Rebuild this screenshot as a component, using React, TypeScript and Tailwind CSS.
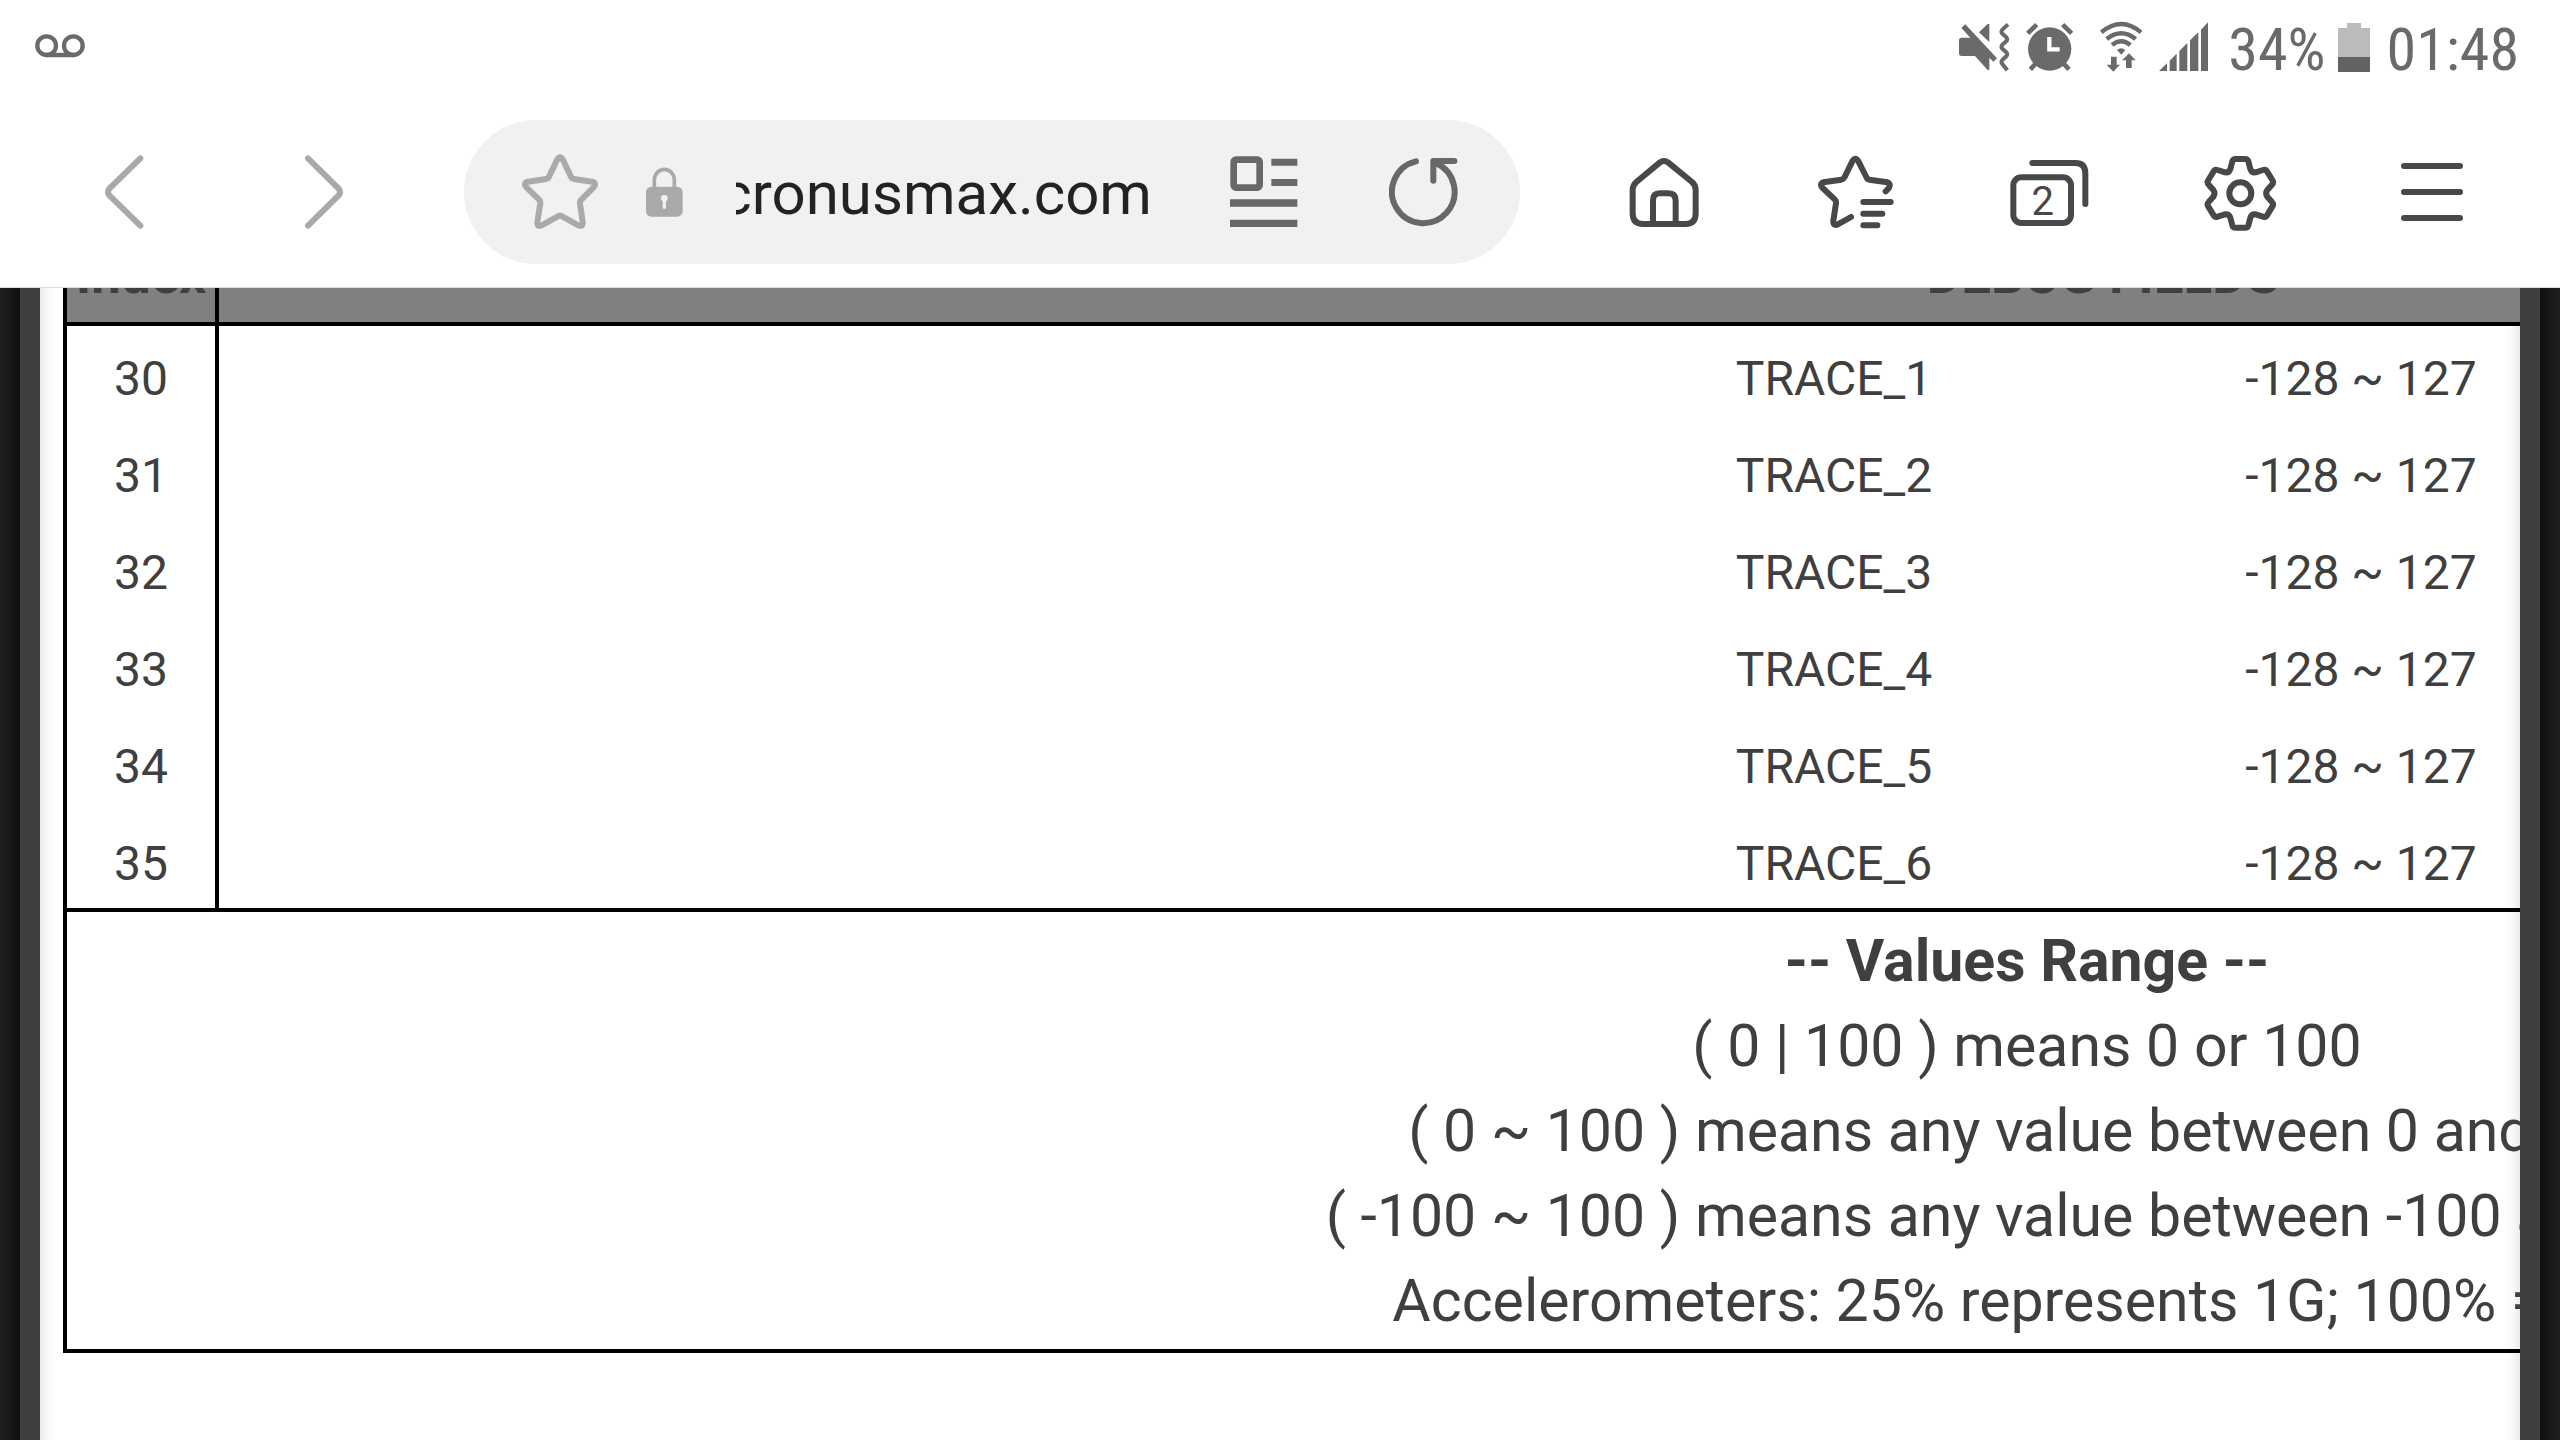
import React from "react";

type IconProps = { box: string; className: string; children: React.ReactNode };

function Icon({ box, className, children }: IconProps) {
  return (
    <svg viewBox={box} className={`shrink-0 ${className}`} fill="none" strokeLinecap="round" strokeLinejoin="round" aria-hidden="true">
      {children}
    </svg>
  );
}

function StatusBar() {
  return (
    <div className="flex h-24 items-center pr-[41px] pl-[35px] text-[#6a6a6a]">
      <Icon box="105 60 150 168" className="h-14 w-[50px]">
        <g stroke="currentColor" strokeWidth="13">
          <circle cx="140" cy="137" r="28" />
          <circle cx="220" cy="137" r="28" />
          <path d="M140 165H220" />
        </g>
      </Icon>
      <Icon box="42 30 153 168" className="ml-auto h-14 w-[51px]">
        <path fill="currentColor" d="M50 83H76L49 54L61 43L156 145L145 155L133 143V180H128L90 138H50Q42 138 42 130V91Q42 83 50 83ZM102 67L128 42H133V96Z" />
        <path stroke="currentColor" strokeWidth="12" strokeLinecap="butt" d="M189 43L172 59Q167 65 172 71L184 82Q189 88 184 94L172 104Q167 110 172 116L184 127Q189 133 184 139L172 150Q167 156 172 162L187 181" />
      </Icon>
      <Icon box="243 30 141 168" className="ml-4 h-14 w-[47px]">
        <circle cx="314" cy="117" r="65" fill="currentColor" />
        <path stroke="currentColor" strokeWidth="14" strokeLinecap="butt" d="M248 70L275 44M353 44L380 70M272 161L256 178M356 161L372 178" />
        <path stroke="white" strokeWidth="13" strokeLinecap="butt" strokeLinejoin="miter" d="M313 81V118H344" />
      </Icon>
      <Icon box="466 30 129 168" className="ml-[27px] h-14 w-[43px]">
        <path stroke="currentColor" strokeWidth="13" strokeLinecap="butt" d="M470 67Q530 17 589 67M486 87Q530 52 573 87M502 105Q530 82 557 105" />
        <path fill="currentColor" d="M517 120Q530 109 542 120L530 134ZM499 140H516V164H526L506 185L486 164H499ZM553 130L573 151H561V174H544V151H532Z" />
      </Icon>
      <Icon box="642 30 147 168" className="ml-4 h-14 w-[49px]">
        <path fill="currentColor" d="M642 183L666 160V183ZM674 152L695 131V183H674ZM703 123L727 99V183H703ZM735 91L760 67V183H735ZM768 59L789 37V183H768Z" />
      </Icon>
      <span className="ml-5 pt-1 font-['Roboto_Condensed',Roboto,sans-serif] text-[60px] leading-none">34%</span>
      <Icon box="2338 20 32 56" className="ml-3 h-14 w-8">
        <path fill="#bbbbbb" d="M2338 28H2347V23H2361V28H2370V57H2338Z" />
        <path fill="#636363" d="M2338 57H2370V72H2338Z" />
      </Icon>
      <span className="ml-[17px] pt-1 font-['Roboto_Condensed',Roboto,sans-serif] text-[60px] leading-none">01:48</span>
    </div>
  );
}

function Toolbar() {
  return (
    <nav className="flex h-48 items-center border-b border-[#dedede] pr-24 pl-[104px] text-[#484848]">
      <button type="button" aria-label="Back" className="text-[#a9a9a9]">
        <Icon box="312 456 120 240" className="h-20 w-10">
          <path stroke="currentColor" strokeWidth="18" d="M421 475L328 566Q320 576 328 586L421 677" />
        </Icon>
      </button>
      <button type="button" aria-label="Forward" className="ml-40 text-[#a9a9a9]">
        <Icon box="912 456 120 240" className="h-20 w-10">
          <path stroke="currentColor" strokeWidth="18" d="M924 475L1016 566Q1024 576 1016 586L924 677" />
        </Icon>
      </button>

      <div className="ml-[120px] flex h-36 min-w-0 flex-1 items-center rounded-full bg-[#f1f1f1] pr-[61px] pl-[58px] text-[#686868]">
        <button type="button" aria-label="Bookmark this page" className="text-[#a9abaa]">
          <Icon box="66 66 228 240" className="h-20 w-[76px]">
            <path
              stroke="currentColor"
              strokeWidth="18"
              d="M172 88Q180 76 188 88L213 140Q215 146 222 147L276 155Q292 160 280 173L244 209Q239 214 240 220L248 276Q249 292 235 286L188 260Q180 254 172 260L125 286Q111 292 112 276L121 220Q122 214 117 209L80 173Q68 160 84 155L138 147Q145 146 147 140Z"
            />
          </Icon>
        </button>
        <Icon box="437 66 111 240" className="ml-12 h-20 w-[37px]">
          <rect x="437" y="170" width="110" height="90" rx="16" fill="#a9a9a9" />
          <path stroke="#a9a9a9" strokeWidth="11" d="M462 174V150A30 32 0 0 1 522 150V174" />
          <circle cx="492" cy="205" r="10" fill="#f1f1f1" />
          <path stroke="#f1f1f1" strokeWidth="10" d="M492 206V232" />
        </Icon>
        <input
          type="text"
          aria-label="Address"
          dir="rtl"
          readOnly
          value="cronusmax.com"
          className="ml-[53px] h-20 w-0 min-w-0 flex-1 bg-transparent pt-1 text-[60px] leading-none text-[#222222] outline-none"
        />
        <button type="button" aria-label="Reader mode" className="ml-[78px]">
          <Icon box="30 66 204 240" className="h-20 w-[68px]">
            <rect x="41" y="89" width="78" height="84" rx="7" stroke="currentColor" strokeWidth="20" />
            <path fill="currentColor" d="M154 86H232V107H154ZM154 147H232V168H154ZM30 208H232V230H30ZM30 269H232V291H30Z" />
          </Icon>
        </button>
        <button type="button" aria-label="Reload" className="ml-[91px]">
          <Icon box="508 66 210 240" className="h-20 w-[70px]">
            <path stroke="currentColor" strokeWidth="18" d="M589 94A94 94 0 1 0 650 100M704 93H641V152" />
          </Icon>
        </button>
      </div>

      <button type="button" aria-label="Home" className="ml-[109px]">
        <Icon box="1228 66 213 240" className="h-20 w-[71px]">
          <path
            stroke="currentColor"
            strokeWidth="18"
            d="M1239 180Q1239 166 1250 156L1320 98Q1333 88 1346 98L1417 156Q1428 166 1428 180V250Q1428 282 1398 282H1270Q1239 282 1239 250ZM1300 282V212Q1300 190 1320 190H1346Q1368 190 1368 212V282"
          />
        </Icon>
      </button>
      <button type="button" aria-label="Bookmarks" className="ml-[118px]">
        <Icon box="54 66 228 240" className="h-20 w-[76px]">
          <path
            stroke="currentColor"
            strokeWidth="18"
            d="M257 184L265 176Q275 162 262 157L208 149Q201 147 199 141L174 92Q166 80 158 92L134 141Q131 147 124 149L70 157Q57 162 68 174L104 208Q109 213 108 220L100 272Q98 288 112 284L153 261M190 216H272M190 251H247M190 286H232"
          />
        </Icon>
      </button>
      <button type="button" aria-label="Tabs" className="ml-[116px]">
        <Icon box="629 66 237 240" className="h-20 w-[79px]">
          <rect x="639" y="142" width="173" height="137" rx="24" stroke="currentColor" strokeWidth="18" />
          <path stroke="currentColor" strokeWidth="18" d="M696 99H825Q855 99 855 130V222" />
          <text x="727" y="255" textAnchor="middle" fontSize="120" fill="currentColor">2</text>
        </Icon>
      </button>
      <button type="button" aria-label="Settings" className="ml-[115px]">
        <Icon box="1211 66 219 240" className="h-20 w-[73px]">
          <circle cx="1320" cy="190" r="33" stroke="currentColor" strokeWidth="18" />
          <path
            stroke="currentColor"
            strokeWidth="18"
            d="M1306 87H1334Q1342 87 1344 94L1350 117Q1354 129 1366 127L1388 120Q1396 117 1400 124L1416 150Q1421 158 1415 164L1401 180Q1394 190 1401 200L1415 216Q1421 222 1416 230L1400 256Q1396 263 1388 260L1366 253Q1354 251 1350 263L1344 286Q1342 293 1334 293H1306Q1298 293 1296 286L1290 263Q1286 251 1274 253L1252 260Q1244 263 1240 256L1224 230Q1219 222 1225 216L1239 200Q1246 190 1239 180L1225 164Q1219 158 1224 150L1240 124Q1244 117 1252 120L1274 127Q1286 129 1290 117L1296 94Q1298 87 1306 87Z"
          />
        </Icon>
      </button>
      <button type="button" aria-label="Menu" className="ml-[123px]">
        <Icon box="2400 152 64 80" className="h-20 w-16">
          <path stroke="currentColor" strokeWidth="6" d="M2404 166H2460M2404 192H2460M2404 218H2460" />
        </Icon>
      </button>
    </nav>
  );
}

const traces = [
  { index: 30, name: "TRACE_1" },
  { index: 31, name: "TRACE_2" },
  { index: 32, name: "TRACE_3" },
  { index: 33, name: "TRACE_4" },
  { index: 34, name: "TRACE_5" },
  { index: 35, name: "TRACE_6" },
];

function FieldsTable() {
  return (
    <table className="w-[3928px] table-fixed border-collapse border-4 border-black text-center text-[48px] leading-[89px]">
      <colgroup>
        <col className="w-[152px]" />
        <col className="w-[1433px]" />
        <col className="w-[368px]" />
        <col className="w-[686px]" />
        <col />
      </colgroup>
      <thead>
        <tr className="bg-[#808080] text-[53px] leading-[93px]">
          <th scope="col" className="border-4 border-black p-0 font-bold">Index</th>
          <th scope="col" colSpan={4} className="border-4 border-black p-0 font-bold">DEBUG FIELDS</th>
        </tr>
      </thead>
      <tbody>
        {traces.map((t) => (
          <tr key={t.index}>
            <td className="border-r-4 border-black p-0 pt-2">{t.index}</td>
            <td />
            <td className="p-0 pt-2">{t.name}</td>
            <td className="p-0 pt-2">-128 ~ 127</td>
            <td />
          </tr>
        ))}
      </tbody>
      <tfoot>
        <tr>
          <td colSpan={5} className="border-4 border-black px-0 py-1.5 text-[59px] leading-[85px]">
            <p className="font-bold">-- Values Range --</p>
            <p>( 0 | 100 ) means 0 or 100</p>
            <p>( 0 ~ 100 ) means any value between 0 and 100</p>
            <p>( -100 ~ 100 ) means any value between -100 and 100</p>
            <p>Accelerometers: 25% represents 1G; 100% = 4Gs</p>
          </td>
        </tr>
      </tfoot>
    </table>
  );
}

export default function App() {
  return (
    <div className="flex min-h-screen flex-col bg-white font-[Roboto,sans-serif] text-[#3f3f3f]">
      <header>
        <StatusBar />
        <Toolbar />
      </header>
      <main className="flex flex-1 flex-col overflow-hidden bg-[#1e1e1e] px-5">
        <div className="-mt-24 -mb-10 flex-1 border-x-20 border-[#3f3f3f] bg-white pt-[33px] pb-[127px] shadow-[0_0_20px_#000000,inset_0_0_16px_rgba(0,0,0,0.16)]">
          <div className="overflow-hidden pl-[23px]">
            <FieldsTable />
          </div>
        </div>
      </main>
    </div>
  );
}
